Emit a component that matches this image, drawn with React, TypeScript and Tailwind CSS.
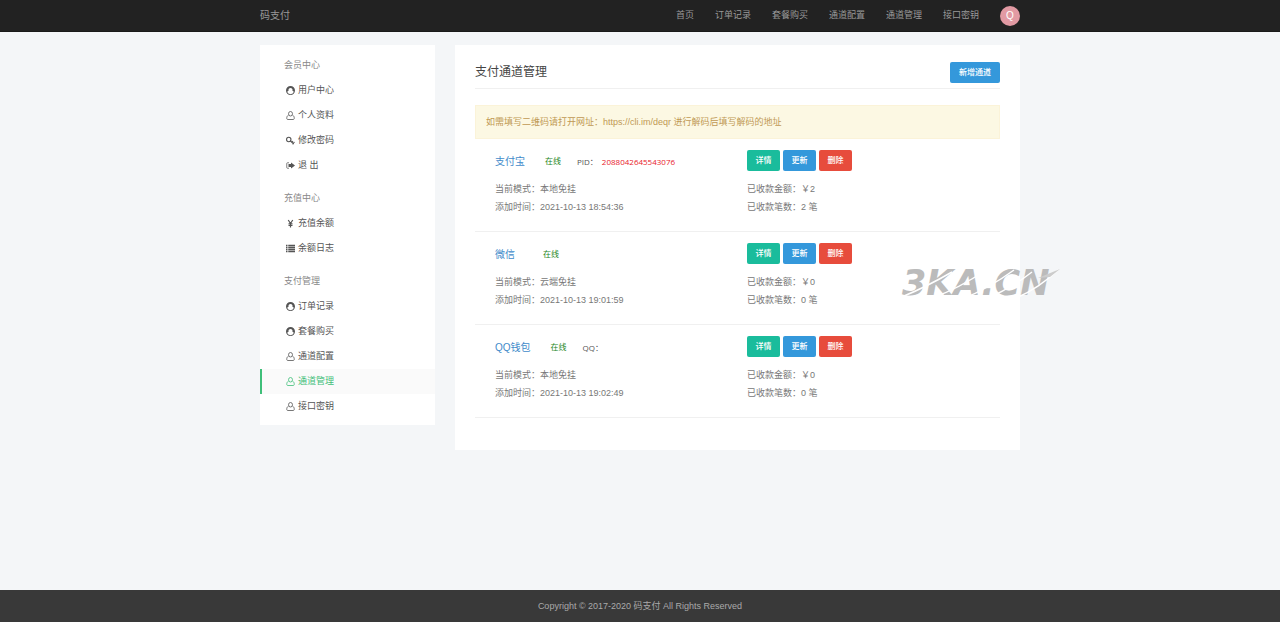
import type { ReactNode } from 'react';

type IconName = 'circle' | 'user' | 'key' | 'exit' | 'yen' | 'list';

interface MenuItem {
  label: string;
  icon: IconName;
  active?: boolean;
}

interface MenuGroup {
  title: string;
  items: MenuItem[];
}

interface Channel {
  name: string;
  account?: string;
  accountValue?: string;
  mode: string;
  addedAt: string;
  amount: number;
  count: number;
}

const navLinks = ['首页', '订单记录', '套餐购买', '通道配置', '通道管理', '接口密钥'];

const menu: MenuGroup[] = [
  {
    title: '会员中心',
    items: [
      { label: '用户中心', icon: 'circle' },
      { label: '个人资料', icon: 'user' },
      { label: '修改密码', icon: 'key' },
      { label: '退 出', icon: 'exit' },
    ],
  },
  {
    title: '充值中心',
    items: [
      { label: '充值余额', icon: 'yen' },
      { label: '余额日志', icon: 'list' },
    ],
  },
  {
    title: '支付管理',
    items: [
      { label: '订单记录', icon: 'circle' },
      { label: '套餐购买', icon: 'circle' },
      { label: '通道配置', icon: 'user' },
      { label: '通道管理', icon: 'user', active: true },
      { label: '接口密钥', icon: 'user' },
    ],
  },
];

const channels: Channel[] = [
  {
    name: '支付宝',
    account: 'PID',
    accountValue: '2088042645543076',
    mode: '本地免挂',
    addedAt: '2021-10-13 18:54:36',
    amount: 2,
    count: 2,
  },
  { name: '微信', mode: '云端免挂', addedAt: '2021-10-13 19:01:59', amount: 0, count: 0 },
  { name: 'QQ钱包', account: 'QQ', mode: '本地免挂', addedAt: '2021-10-13 19:02:49', amount: 0, count: 0 },
];

const iconShapes: Record<IconName, ReactNode> = {
  circle: (
    <path
      fill="currentColor"
      fillRule="evenodd"
      d="M9 0a9 9 0 1 0 0 18A9 9 0 0 0 9 0zM3.500 13.500C2.500 12 2.500 10.500 4 10h1.200a4.200 4.200 0 1 1 7.600 0H14c1.500.5 1.500 2 .5 3.500C13 15.500 11 16.300 9 16.300S5 15.500 3.500 13.500z"
    />
  ),
  user: (
    <path
      fill="none"
      stroke="currentColor"
      strokeWidth="1.600"
      d="M5 8.500C2 9.500 1.500 12.500 1.500 14.500S2.500 17 4 17h10c1.500 0 2.500-.5 2.500-2.500s-.5-5-3.500-6M9 10a4 4.500 0 1 0 0-9 4 4.500 0 0 0 0 9z"
    />
  ),
  key: (
    <g fill="none" stroke="currentColor" strokeWidth="2.200">
      <circle cx="5.500" cy="7" r="4.400" />
      <path d="M8.500 9.500l7 6.500M11 13.500l3-3.500M13 16.500l4-4.500" />
    </g>
  ),
  exit: (
    <>
      <path d="M6 3.500H3A1.500 1.500 0 0 0 1.500 5v8A1.500 1.500 0 0 0 3 14.500h3" fill="none" stroke="currentColor" strokeWidth="1.500" />
      <path d="M5 6H10V3l8 6-8 6v-3H5z" fill="currentColor" />
    </>
  ),
  yen: <path d="M4.500 2l4.500 7 4.500-7M9 9v8M5 9.500h8M5 12.800h8" fill="none" stroke="currentColor" strokeWidth="2.400" />,
  list: (
    <path
      d="M0 3h3M4.500 3H18M0 7h3M4.500 7H18M0 11h3M4.500 11H18M0 15h3M4.500 15H18"
      fill="none"
      stroke="currentColor"
      strokeWidth="2.600"
    />
  ),
};

function Icon({ name }: { name: IconName }) {
  return (
    <svg viewBox="0 0 18 18" className="h-[9px] w-[9px] shrink-0" aria-hidden="true">
      {iconShapes[name]}
    </svg>
  );
}

function Header() {
  return (
    <header className="border-b border-[#1a1a1a] bg-[#222]">
      <div className="mx-auto flex h-[31px] w-full max-w-[760px] items-center justify-between text-[#999]">
        <a href="#" className="text-[10px]">码支付</a>
        <nav className="flex items-center gap-[21px] text-[9px]">
          {navLinks.map((label) => (
            <a key={label} href="#">{label}</a>
          ))}
          <a href="#" className="flex h-5 w-5 items-center justify-center rounded-full bg-[#e29aa3] text-[10px] text-white">
            Q
          </a>
        </nav>
      </div>
    </header>
  );
}

function Sidebar() {
  return (
    <aside className="flex w-[175px] shrink-0 flex-col gap-2 bg-white pt-2 pb-[6px]">
      {menu.map((group) => (
        <section key={group.title}>
          <h2 className="pl-6 text-[9px] leading-[25px] text-[#888]">{group.title}</h2>
          <ul>
            {group.items.map((item) => (
              <li key={item.label}>
                <a
                  href="#"
                  className={
                    item.active
                      ? 'flex h-[25px] items-center gap-[3px] border-l-2 border-[#3fbf79] bg-[#fafafa] pl-6 text-[9px] text-[#3fbf79]'
                      : 'flex h-[25px] items-center gap-[3px] border-l-2 border-transparent pl-6 text-[9px] text-[#555]'
                  }
                >
                  <Icon name={item.icon} />
                  {item.label}
                </a>
              </li>
            ))}
          </ul>
        </section>
      ))}
    </aside>
  );
}

function ChannelRow({ channel }: { channel: Channel }) {
  return (
    <li className="grid grid-cols-[252px_1fr] gap-y-[9px] border-b border-[#f0f0f0] pt-[11px] pb-[15px] pl-5">
      <div className="flex h-[21px] items-center text-[8px]">
        <h3 className="min-w-7 pt-[2px] text-[10px] text-[#428bca]">{channel.name}</h3>
        <span className="pt-[3px] pl-5 text-[#1b861b]">在线</span>
        {channel.account && (
          <span className="pt-[3px] pl-4 font-['Open_Sans','Noto_Sans_CJK_SC',sans-serif] text-[#555]">
            {channel.account}：<span className="ml-1 text-[#e8202a]">{channel.accountValue}</span>
          </span>
        )}
      </div>
      <div className="flex gap-[3px] text-[8px] font-medium text-white">
        <button type="button" className="h-[21px] w-[33px] rounded-xs bg-[#1abc9c]">详情</button>
        <button type="button" className="h-[21px] w-[33px] rounded-xs bg-[#3498db]">更新</button>
        <button type="button" className="h-[21px] w-[33px] rounded-xs bg-[#e74c3c]">删除</button>
      </div>
      <div className="text-[9px] leading-[18px] text-[#777]">
        <p>当前模式：{channel.mode}</p>
        <p>添加时间：{channel.addedAt}</p>
      </div>
      <div className="text-[9px] leading-[18px] text-[#777]">
        <p>已收款金额：￥{channel.amount}</p>
        <p>已收款笔数：{channel.count} 笔</p>
      </div>
    </li>
  );
}

function Watermark() {
  return (
    <div className="pointer-events-none absolute top-[218px] right-[-40px] w-[158px]" aria-hidden="true">
      <p className="font-['DejaVu_Sans',sans-serif] text-[35px] leading-10 font-bold text-[#bbb] italic">3KA.CN</p>
      <svg viewBox="0 0 158 40" className="absolute inset-0 h-10 w-[158px]">
        <path
          d="M2 33Q24 24 50 9M30 35Q56 26 84 7M60 36Q86 26 112 7M84 36Q108 26 130 9M112 36Q136 26 156 7"
          stroke="#fff"
          strokeWidth="1.500"
          fill="none"
        />
        <path d="M136 15L158 6L148 14z" fill="#ccc" />
      </svg>
    </div>
  );
}

export default function App() {
  return (
    <div className="flex min-h-screen flex-col bg-[#f4f6f8] font-['Liberation_Sans','Noto_Sans_CJK_SC',sans-serif]">
      <Header />
      <div className="mx-auto flex w-full max-w-[760px] grow items-start gap-5 pt-[13px] pb-8">
        <Sidebar />
        <main className="relative grow bg-white px-5 pt-[17px] pb-8">
          <div className="flex items-start justify-between border-b border-[#f0f0f0] pb-[5px]">
            <h1 className="text-[12px] leading-[21px] text-[#444]">支付通道管理</h1>
            <button type="button" className="h-[21px] w-[50px] rounded-xs bg-[#3498db] text-[8px] font-medium text-white">
              新增通道
            </button>
          </div>
          <p className="mt-4 border border-[#fbf3d8] bg-[#fcf8e3] px-[10px] text-[9px] leading-8 text-[#c09853]">
            如需填写二维码请打开网址：https://cli.im/deqr 进行解码后填写解码的地址
          </p>
          <ul>
            {channels.map((channel) => (
              <ChannelRow key={channel.name} channel={channel} />
            ))}
          </ul>
          <Watermark />
        </main>
      </div>
      <footer className="bg-[#393939] text-center text-[9px] leading-8 text-[#aaa]">
        Copyright © 2017-2020 码支付 All Rights Reserved
      </footer>
    </div>
  );
}
